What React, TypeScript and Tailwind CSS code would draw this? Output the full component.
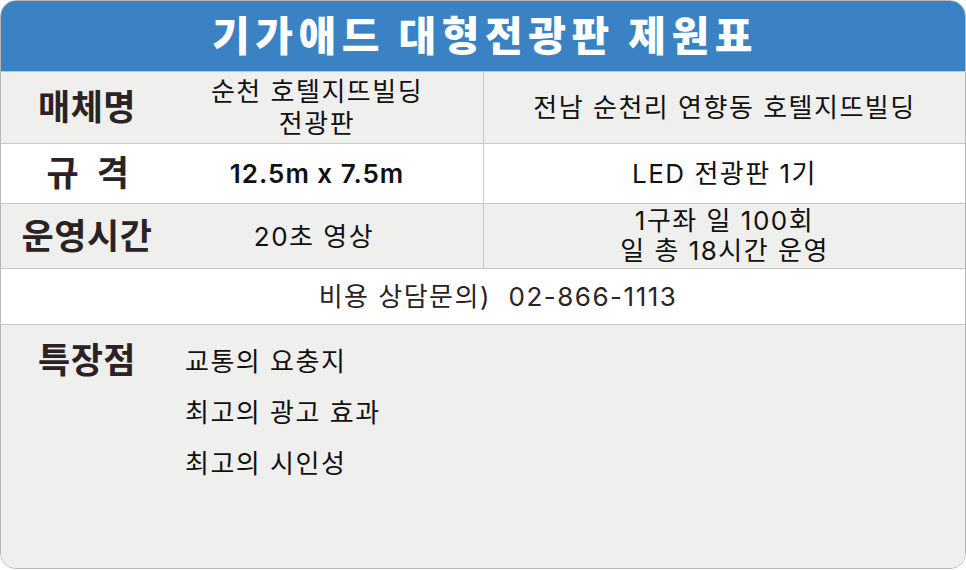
import React from 'react';

const kr = { fontFamily: 'Inter, "Noto Sans CJK KR", sans-serif' };

const Label = ({ children }: { children: React.ReactNode }) => (
  <div className="flex items-center justify-center text-[35px] font-bold text-[#2b2323] tracking-[0.5px]" style={kr}>
    {children}
  </div>
);

export default function App() {
  return (
    <div className="w-[966px] h-[570px] bg-white" style={kr}>
      <div className="h-[569px] flex flex-col rounded-[16px] border border-[#b8b8b8] overflow-hidden">
        {/* 헤더 */}
        <div className="h-[70px] shrink-0 bg-[#3a82c4] flex items-center justify-center">
          <h1 className="text-[41px] font-black text-white tracking-[5.5px] leading-none pl-[4px]">
            기가애드 대형전광판 제원표
          </h1>
        </div>

        {/* 매체명 */}
        <div className="h-[72px] shrink-0 grid grid-cols-[172px_310px_1fr] bg-[#efefed] border-t border-[#c4c4c4]">
          <Label>매체명</Label>
          <div className="flex flex-col items-center justify-center pr-[22px] text-[26px] tracking-[1.5px] text-[#111] leading-[32px]">
            <span>순천 호텔지뜨빌딩</span>
            <span>전광판</span>
          </div>
          <div className="flex items-center justify-center border-l border-[#c8c8c8] text-[26px] tracking-[1.5px] text-[#111]">
            전남 순천리 연향동 호텔지뜨빌딩
          </div>
        </div>

        {/* 규격 */}
        <div className="h-[60px] shrink-0 grid grid-cols-[172px_310px_1fr] bg-white border-t border-[#c8c8c8]">
          <Label>
            <span className="pl-[2px]">규&nbsp;&nbsp;격</span>
          </Label>
          <div className="flex items-center justify-center pr-[22px] text-[26px] tracking-[1px] font-semibold text-[#111]">
            12.5m x 7.5m
          </div>
          <div className="flex items-center justify-center border-l border-[#c8c8c8] text-[26px] tracking-[1.5px] text-[#111]">
            LED 전광판 1기
          </div>
        </div>

        {/* 운영시간 */}
        <div className="h-[65px] shrink-0 grid grid-cols-[172px_310px_1fr] bg-[#efefed] border-t border-[#c8c8c8]">
          <Label>운영시간</Label>
          <div className="flex items-center justify-center pr-[28px] text-[26px] tracking-[1.5px] text-[#111]">
            20초 영상
          </div>
          <div className="flex flex-col items-center justify-center border-l border-[#c8c8c8] text-[26px] tracking-[1.5px] text-[#111] leading-[30px]">
            <span>1구좌 일 100회</span>
            <span>일 총 18시간 운영</span>
          </div>
        </div>

        {/* 비용 문의 */}
        <div className="h-[56px] shrink-0 flex items-center justify-center pl-[30px] bg-white border-t border-[#c8c8c8] text-[26px] tracking-[1.5px] text-[#2b2323]">
          비용 상담문의)&nbsp; 02-866-1113
        </div>

        {/* 특장점 */}
        <div className="flex-1 flex bg-[#efefed] border-t border-[#c8c8c8]">
          <div className="w-[172px] shrink-0 pt-[15px] flex justify-center">
            <span className="text-[35px] font-bold text-[#2b2323] tracking-[0.5px] leading-[40px]">특장점</span>
          </div>
          <ul className="pt-[19px] pl-[12px] flex flex-col gap-[15px] text-[26px] tracking-[1.5px] text-[#111] leading-[36px]">
            <li>교통의 요충지</li>
            <li>최고의 광고 효과</li>
            <li>최고의 시인성</li>
          </ul>
        </div>
      </div>
    </div>
  );
}
